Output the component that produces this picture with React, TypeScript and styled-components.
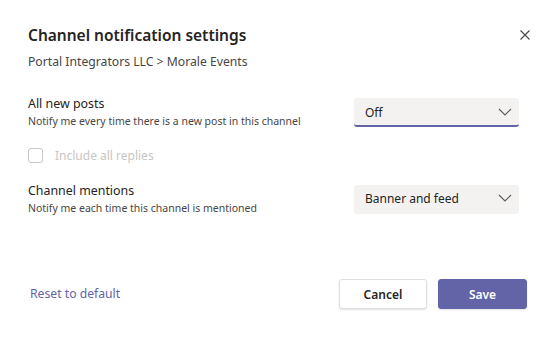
import React from "react";
import styled, { createGlobalStyle } from "styled-components";

const GlobalStyle = createGlobalStyle`
  html, body {
    margin: 0;
    padding: 0;
    background: #ffffff;
  }
  body {
    font-family: "Segoe UI", "Noto Sans", "Liberation Sans", sans-serif;
    color: #252423;
  }
`;

const Dialog = styled.div`
  width: 556px;
  height: 337px;
  box-sizing: border-box;
  padding: 22px 29px 28px 28px;
  display: flex;
  flex-direction: column;
`;

const Header = styled.div`
  display: flex;
  justify-content: space-between;
  align-items: center;
  height: 26px;
`;

const Title = styled.h1`
  margin: 0;
  font-size: 15.5px;
  font-weight: 600;
  color: #252423;
`;

const CloseButton = styled.button`
  border: none;
  background: none;
  padding: 0;
  width: 20px;
  height: 20px;
  display: flex;
  align-items: center;
  justify-content: center;
  margin-right: -8px;
  color: #484644;
`;

const Breadcrumb = styled.div`
  margin-top: 5px;
  font-size: 12.2px;
  color: #484644;
`;

const Section = styled.div<{ $top: number }>`
  display: flex;
  justify-content: space-between;
  align-items: center;
  padding-right: 8px;
  margin-top: ${(p) => p.$top}px;
`;

const Labels = styled.div`
  display: flex;
  flex-direction: column;
`;

const Label = styled.div`
  font-size: 12.4px;
  color: #252423;
  line-height: 18px;
`;

const Hint = styled.div`
  font-size: 10.5px;
  color: #484644;
  line-height: 16px;
`;

const Select = styled.div<{ $active?: boolean }>`
  width: 165px;
  height: 29px;
  box-sizing: border-box;
  background: #f3f2f1;
  border-radius: 3px;
  border-bottom: 2px solid ${(p) => (p.$active ? "#6264a7" : "transparent")};
  display: flex;
  align-items: center;
  justify-content: space-between;
  padding: ${(p) => (p.$active ? "2px" : "0")} 7px 0 11px;
  font-size: 12px;
  color: #252423;
`;

const CheckRow = styled.label`
  display: flex;
  align-items: center;
  gap: 12px;
  margin-top: 18px;
  font-size: 12px;
  color: #c8c6c4;
`;

const Box = styled.span`
  width: 13px;
  height: 13px;
  border: 1px solid #c8c6c4;
  border-radius: 3px;
`;

const Footer = styled.div`
  margin-top: auto;
  display: flex;
  align-items: center;
  justify-content: space-between;
`;

const Link = styled.a`
  font-size: 12.2px;
  color: #6264a7;
  margin-left: 2px;
  margin-top: -2px;
  text-decoration: none;
`;

const Buttons = styled.div`
  display: flex;
  gap: 11px;
`;

const Button = styled.button<{ $primary?: boolean }>`
  width: ${(p) => (p.$primary ? 89 : 88)}px;
  height: 30px;
  border-radius: 3px;
  font-family: inherit;
  font-size: 12px;
  font-weight: 600;
  border: 1px solid ${(p) => (p.$primary ? "#6264a7" : "#e1dfdd")};
  background: ${(p) => (p.$primary ? "#6264a7" : "#ffffff")};
  color: ${(p) => (p.$primary ? "#ffffff" : "#252423")};
  box-shadow: 0 1px 2px rgba(0, 0, 0, 0.12);
`;

const Chevron = () => (
  <svg width="14" height="8" viewBox="0 0 14 8" fill="none">
    <path d="M1 1l6 6 6-6" stroke="#605e5c" strokeWidth="1.2" />
  </svg>
);

export default function App() {
  return (
    <>
      <GlobalStyle />
      <Dialog>
        <Header>
          <Title>Channel notification settings</Title>
          <CloseButton aria-label="Close">
            <svg width="10" height="10" viewBox="0 0 10 10">
              <path d="M0.5 0.5l9 9M9.5 0.5l-9 9" stroke="#484644" strokeWidth="1.1" />
            </svg>
          </CloseButton>
        </Header>
        <Breadcrumb>Portal Integrators LLC &gt; Morale Events</Breadcrumb>

        <Section $top={25}>
          <Labels>
            <Label>All new posts</Label>
            <Hint>Notify me every time there is a new post in this channel</Hint>
          </Labels>
          <Select $active>
            Off
            <Chevron />
          </Select>
        </Section>

        <CheckRow>
          <Box />
          Include all replies
        </CheckRow>

        <Section $top={18}>
          <Labels>
            <Label>Channel mentions</Label>
            <Hint>Notify me each time this channel is mentioned</Hint>
          </Labels>
          <Select>
            Banner and feed
            <Chevron />
          </Select>
        </Section>

        <Footer>
          <Link href="#">Reset to default</Link>
          <Buttons>
            <Button>Cancel</Button>
            <Button $primary>Save</Button>
          </Buttons>
        </Footer>
      </Dialog>
    </>
  );
}
